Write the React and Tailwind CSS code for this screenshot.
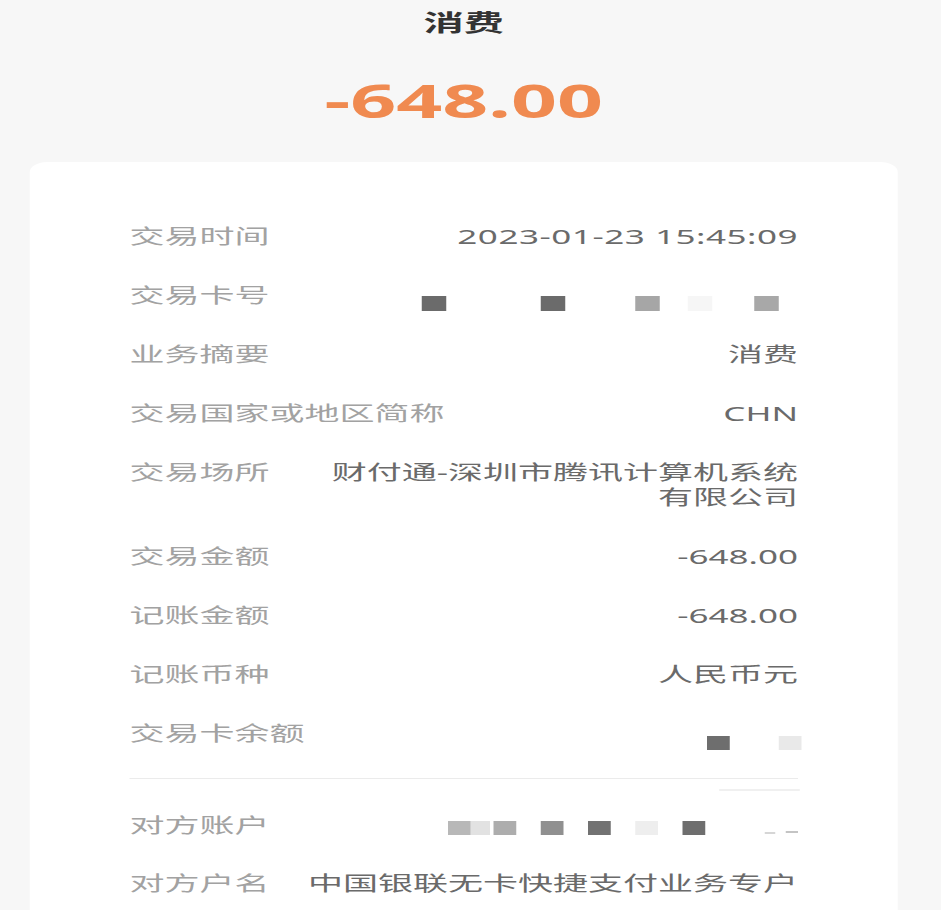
import React from "react";

function Row({ label, children, tall }) {
  return (
    <div
      className={
        tall
          ? "flex justify-between items-start leading-[25px] h-[50px] overflow-visible"
          : "flex justify-between items-start leading-[25px] h-[25px] overflow-visible"
      }
    >
      <div className="shrink-0 whitespace-nowrap text-[#a2a2a2]">{label}</div>
      {children}
    </div>
  );
}

function Val({ children }) {
  return <div className="text-right text-[#6a6a6a] whitespace-nowrap">{children}</div>;
}

export default function App() {
  return (
    <div className="w-[941px] h-[910px] overflow-hidden bg-[#f7f7f7] font-['Noto_Sans','Noto_Sans_CJK_SC',sans-serif]">
      <div className="w-[538px] origin-top-left scale-x-[1.75]">
        <div className="ml-[17px] w-[496px] flex flex-col">
          <div className="mt-[7px] text-center text-[23px] leading-[30px] font-bold text-[#333333]">
            消费
          </div>
          <div className="mt-[35px] text-center text-[46px] leading-[56px] font-bold text-[#f08a50]">
            -648.00
          </div>
          <div className="mt-[34px] bg-white rounded-t-[10px] pt-[62px] px-[57px] h-[760px] text-[20px]">
            <div className="flex flex-col gap-[34px]">
              <Row label="交易时间">
                <div className="text-right text-[#6a6a6a] whitespace-nowrap tracking-[0.3px]">
                  2023-01-23 15:45:09
                </div>
              </Row>
              <Row label="交易卡号">
                <div className="flex items-start pr-[11px]">
                  <div className="mt-[13px] h-[15px] w-[14px] bg-[#6b6b6b]" />
                  <div className="ml-[54px] mt-[13px] h-[15px] w-[14px] bg-[#6b6b6b]" />
                  <div className="ml-[40px] mt-[13px] h-[15px] w-[14px] bg-[#a6a6a6]" />
                  <div className="ml-[16px] mt-[13px] h-[15px] w-[14px] bg-[#f6f6f6]" />
                  <div className="ml-[24px] mt-[13px] h-[15px] w-[14px] bg-[#a8a8a8]" />
                </div>
              </Row>
              <Row label="业务摘要">
                <Val>消费</Val>
              </Row>
              <Row label="交易国家或地区简称">
                <Val>CHN</Val>
              </Row>
              <Row label="交易场所" tall>
                <Val>
                  财付通-深圳市腾讯计算机系统
                  <br />
                  有限公司
                </Val>
              </Row>
              <Row label="交易金额">
                <Val>-648.00</Val>
              </Row>
              <Row label="记账金额">
                <Val>-648.00</Val>
              </Row>
              <Row label="记账币种">
                <Val>人民币元</Val>
              </Row>
              <Row label="交易卡余额">
                <div className="flex items-start mr-[-2px]">
                  <div className="mt-[15px] h-[14px] w-[13px] bg-[#6e6e6e]" />
                  <div className="ml-[28px] mt-[15px] h-[14px] w-[13px] bg-[#e9e9e9]" />
                </div>
              </Row>
            </div>
            <div className="mt-[32px] h-[1px] bg-[#ebebeb]" />
            <div className="ml-auto mr-[-1px] mt-[10px] h-[2px] w-[46px] bg-[#f0f0f0]" />
            <div className="mt-[22px] flex flex-col gap-[33px]">
              <Row label="对方账户">
                <div className="flex items-start">
                  <div className="mt-[8px] h-[14px] w-[13px] bg-[#b8b8b8]" />
                  <div className="mt-[8px] h-[14px] w-[11px] bg-[#e2e2e2]" />
                  <div className="ml-[2px] mt-[8px] h-[14px] w-[13px] bg-[#adadad]" />
                  <div className="ml-[14px] mt-[8px] h-[14px] w-[13px] bg-[#909090]" />
                  <div className="ml-[14px] mt-[8px] h-[14px] w-[13px] bg-[#727272]" />
                  <div className="ml-[14px] mt-[8px] h-[14px] w-[13px] bg-[#eeeeee]" />
                  <div className="ml-[14px] mt-[8px] h-[14px] w-[13px] bg-[#6e6e6e]" />
                  <div className="ml-[34px] mt-[19px] h-[2px] w-[6px] bg-[#d6d6d6]" />
                  <div className="ml-[6px] mt-[18px] h-[2px] w-[7px] bg-[#c4c4c4]" />
                </div>
              </Row>
              <Row label="对方户名">
                <Val>中国银联无卡快捷支付业务专户</Val>
              </Row>
            </div>
          </div>
        </div>
      </div>
    </div>
  );
}
